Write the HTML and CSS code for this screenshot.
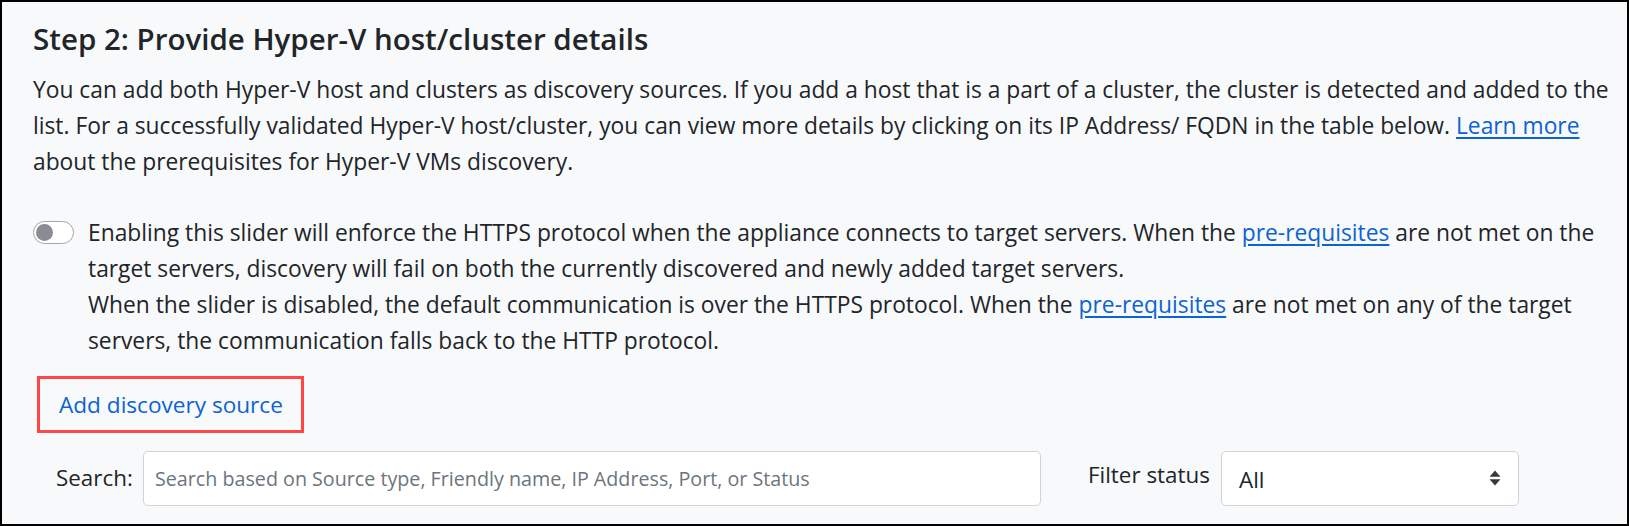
FILE: index.html
```html
<!DOCTYPE html>
<html lang="en">
<head>
<meta charset="utf-8">
<title>Step 2: Provide Hyper-V host/cluster details</title>
<link rel="stylesheet" href="styles.css">
</head>
<body>
<div class="frame">
  <h2 class="title">Step 2: Provide Hyper-V host/cluster details</h2>
  <p class="intro">You can add both Hyper-V host and clusters as discovery sources. If you add a host that is a part of a cluster, the cluster is detected and added to the<br>list. For a successfully validated Hyper-V host/cluster, you can view more details by clicking on its IP Address/ FQDN in the table below. <a href="#" class="link">Learn more</a><br>about the prerequisites for Hyper-V VMs discovery.</p>

  <div class="switch-row">
    <span class="switch"><span class="knob"></span></span>
    <p class="switch-text">Enabling this slider will enforce the HTTPS protocol when the appliance connects to target servers. When the <a href="#" class="link">pre-requisites</a> are not met on the<br>target servers, discovery will fail on both the currently discovered and newly added target servers.<br>When the slider is disabled, the default communication is over the HTTPS protocol. When the <a href="#" class="link">pre-requisites</a> are not met on any of the target<br>servers, the communication falls back to the HTTP protocol.</p>
  </div>

  <div class="add-row">
    <a href="#" class="add-source">Add discovery source</a>
  </div>

  <div class="search-row">
    <label class="search-label" for="search">Search:</label>
    <input id="search" class="search-input" type="text" placeholder="Search based on Source type, Friendly name, IP Address, Port, or Status">
    <span class="filter-label">Filter status</span>
    <div class="select">
      <span class="select-value">All</span>
      <svg class="select-arrows" width="12" height="16" viewBox="0 0 12 16" aria-hidden="true">
        <path d="M6 0.5 L11.5 6.8 H0.5 Z" fill="#343a40"/>
        <path d="M6 15.5 L11.5 9.2 H0.5 Z" fill="#343a40"/>
      </svg>
    </div>
  </div>
</div>
</body>
</html>
```
FILE: styles.css
```css
html, body {
  margin: 0;
  padding: 0;
}

body {
  background: #f8f9fa;
}

.frame {
  box-sizing: border-box;
  width: 100%;
  height: 526px;
  border: 2px solid #000;
  background: #f8f9fa;
  padding: 19px 31px 0 31px;
  font-family: "Open Sans", "Noto Sans", sans-serif;
  color: #212529;
  overflow: hidden;
}

.title {
  margin: 0 0 14.5px 0;
  font-size: 29.5px;
  font-weight: 600;
  line-height: 36px;
  color: #212529;
}

.intro {
  margin: 0;
  font-size: 22.8px;
  line-height: 36px;
  white-space: nowrap;
}

.link {
  color: #0c63d4;
  text-decoration: underline;
  text-underline-offset: 3px;
}

.switch-row {
  display: flex;
  align-items: flex-start;
  margin-top: 35.4px;
  gap: 14px;
}

.switch {
  box-sizing: border-box;
  flex: 0 0 auto;
  width: 41px;
  height: 23px;
  margin-top: 6px;
  border: 1px solid #a4a4ac;
  border-radius: 12px;
  background: #fff;
  display: flex;
  align-items: center;
  padding-left: 2px;
}

.knob {
  width: 17px;
  height: 17px;
  border-radius: 50%;
  background: #8b8b94;
}

.switch-text {
  margin: 0;
  font-size: 22.8px;
  line-height: 36px;
  white-space: nowrap;
}

.add-row {
  margin-top: 17px;
  padding-left: 4px;
}

.add-source {
  display: inline-block;
  border: 3px solid #ff4747;
  padding: 8px 18px 7px 19px;
  font-size: 22.6px;
  line-height: 36px;
  color: #0c63d4;
  text-decoration: none;
}

.search-row {
  display: flex;
  align-items: center;
  margin-top: 18px;
  padding-left: 23px;
}

.search-label {
  flex: 0 0 87px;
  font-size: 22.4px;
  line-height: 36px;
}

.search-input {
  box-sizing: border-box;
  width: 898px;
  height: 55px;
  border: 1px solid #ced4da;
  border-radius: 5px;
  background: #fff;
  padding: 0 11px;
  font-family: "Open Sans", "Noto Sans", sans-serif;
  font-size: 19.7px;
  color: #212529;
  outline: none;
}

.search-input::placeholder {
  color: #6c757d;
  opacity: 1;
}

.filter-label {
  flex: 0 0 133px;
  margin-left: 47px;
  padding-bottom: 6px;
  font-size: 22.4px;
  line-height: 36px;
}

.select {
  box-sizing: border-box;
  width: 298px;
  height: 55px;
  border: 1px solid #ced4da;
  border-radius: 5px;
  background: #fff;
  display: flex;
  align-items: center;
  justify-content: space-between;
  padding: 0 17px 0 17px;
}

.select-value {
  font-size: 22.4px;
  line-height: 36px;
  padding-top: 4px;
}

.select-arrows {
  display: block;
}
```
